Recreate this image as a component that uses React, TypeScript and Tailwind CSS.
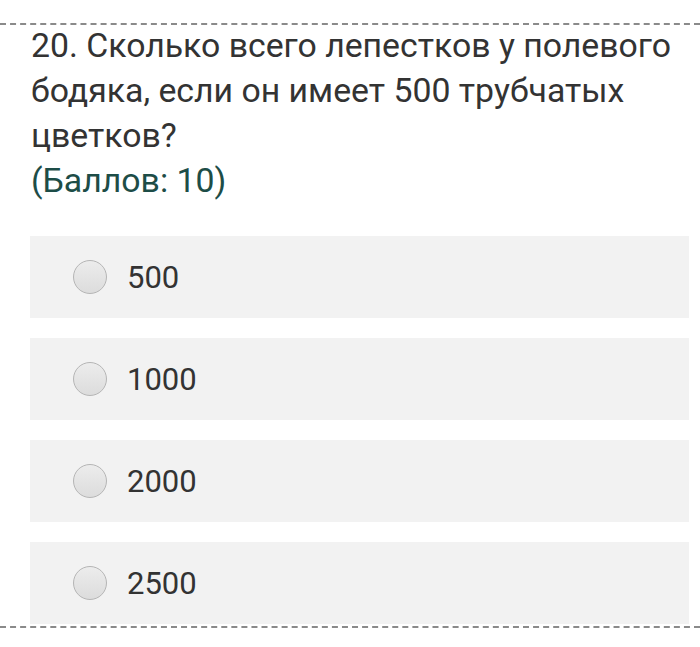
const options = ['500', '1000', '2000', '2500'];

export default function App() {
  return (
    <div className="w-[700px] h-[647px] bg-white overflow-hidden" style={{ fontFamily: 'Roboto, "Noto Sans", sans-serif' }}>
      <div className="h-[23px]" />
      <div className="border-t-2 border-dashed border-[#8a8a8a]">
        {/* question */}
        <div className="-mt-[2px] pl-[31px] pr-2 text-[33.8px] leading-[45px] text-[#333333]">
          <p>20. Сколько всего лепестков у полевого бодяка, если он имеет 500 трубчатых цветков?</p>
          <p className="text-[#1d4d47]">(Баллов: 10)</p>
        </div>

        {/* answers */}
        <div className="mt-[33px] pl-[30px] pr-[11px] flex flex-col gap-[20px]">
          {options.map((opt) => (
            <label key={opt} className="h-[82px] bg-[#f2f2f2] flex items-center">
              <span className="ml-[43px] w-[34px] h-[34px] rounded-full border border-[#b5b5b5] bg-gradient-to-b from-[#ececec] to-[#dcdcdc] shrink-0" />
              <span className="ml-[20px] pt-[2px] text-[31px] text-[#333333]">{opt}</span>
            </label>
          ))}
        </div>
      </div>
      <div className="mt-[2px] border-t-2 border-dashed border-[#8a8a8a]" />
    </div>
  );
}
